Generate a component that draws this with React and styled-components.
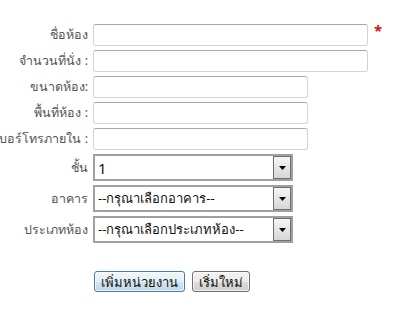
import styled, { createGlobalStyle } from "styled-components";

const GlobalStyle = createGlobalStyle`
  html, body {
    margin: 0;
    padding: 0;
    background: #ffffff;
  }
  body {
    font-family: Tahoma, "Noto Sans", "DejaVu Sans", sans-serif;
  }
`;

const Form = styled.form`
  display: flex;
  flex-direction: column;
  gap: 4px;
  padding-top: 24px;
  width: 393px;
  overflow: hidden;
`;

const Row = styled.div`
  display: grid;
  grid-template-columns: 88px auto;
  column-gap: 5px;
  align-items: center;
`;

const Label = styled.label`
  display: flex;
  justify-content: flex-end;
  white-space: nowrap;
  font-size: 12.5px;
  color: #555555;
`;

const Field = styled.div`
  display: flex;
  align-items: flex-start;
  gap: 6px;
`;

const TextInput = styled.input`
  box-sizing: border-box;
  width: ${(p) => p.$width}px;
  height: 22px;
  margin: 0;
  padding: 2px 4px;
  border: 1px solid #d4d4d4;
  border-top-color: #a9a9a9;
  border-radius: 3px;
  font-size: 13px;
  background: #ffffff;
  outline: none;
`;

const Required = styled.span`
  color: #e01010;
  font-size: 15px;
  font-weight: bold;
  line-height: 1;
  margin-top: -1px;
`;

const SelectBox = styled.div`
  box-sizing: border-box;
  display: flex;
  align-items: stretch;
  width: 200px;
  height: 27px;
  border: 2px solid #a0a0a0;
  background: #ffffff;
`;

const SelectValue = styled.span`
  flex: 1;
  display: flex;
  align-items: center;
  padding-left: 3px;
  font-size: ${(p) => (p.$big ? 15 : 13)}px;
  color: #111111;
  white-space: nowrap;
  overflow: hidden;
`;

const ArrowButton = styled.span`
  box-sizing: border-box;
  width: 18px;
  display: flex;
  align-items: center;
  justify-content: center;
  border: 1px solid #6f6f6f;
  background: linear-gradient(#f6f6f6, #d6d6d6);
`;

const Actions = styled.div`
  display: flex;
  gap: 7px;
  margin-top: 24px;
  padding-left: 94px;
`;

const Button = styled.button`
  box-sizing: border-box;
  height: 21px;
  padding: 0 6px;
  font-family: Tahoma, "Noto Sans", "DejaVu Sans", sans-serif;
  font-size: 13px;
  color: #111111;
  border: 1px solid ${(p) => (p.$focused ? "#3c7fb1" : "#707070")};
  border-radius: 3px;
  background: ${(p) =>
    p.$focused
      ? "linear-gradient(#f0f7fb 0%, #e3eef5 50%, #d4e4ee 51%, #c4d8e5 100%)"
      : "linear-gradient(#f2f2f2 0%, #ebebeb 50%, #dddddd 51%, #cfcfcf 100%)"};
  box-shadow: inset 0 0 0 1px rgba(255, 255, 255, 0.7);
  cursor: pointer;
`;

function Arrow() {
  return (
    <svg width="7" height="4" viewBox="0 0 7 4">
      <path d="M0 0 H7 L3.5 4 Z" fill="#000" />
    </svg>
  );
}

function Select({ value, big }) {
  return (
    <SelectBox>
      <SelectValue $big={big}>{value}</SelectValue>
      <ArrowButton>
        <Arrow />
      </ArrowButton>
    </SelectBox>
  );
}

export default function App() {
  return (
    <>
      <GlobalStyle />
      <Form onSubmit={(e) => e.preventDefault()}>
        <Row>
          <Label>ชื่อห้อง</Label>
          <Field>
            <TextInput $width={275} />
            <Required>*</Required>
          </Field>
        </Row>
        <Row>
          <Label>จำนวนที่นั่ง :</Label>
          <Field>
            <TextInput $width={275} />
          </Field>
        </Row>
        <Row>
          <Label>ขนาดห้อง:</Label>
          <Field>
            <TextInput $width={215} />
          </Field>
        </Row>
        <Row>
          <Label>พื้นที่ห้อง :</Label>
          <Field>
            <TextInput $width={215} />
          </Field>
        </Row>
        <Row>
          <Label>เบอร์โทรภายใน :</Label>
          <Field>
            <TextInput $width={215} />
          </Field>
        </Row>
        <Row>
          <Label>ชั้น</Label>
          <Select value="1" big />
        </Row>
        <Row>
          <Label>อาคาร</Label>
          <Select value="--กรุณาเลือกอาคาร--" />
        </Row>
        <Row>
          <Label>ประเภทห้อง</Label>
          <Select value="--กรุณาเลือกประเภทห้อง--" />
        </Row>
        <Actions>
          <Button type="submit" $focused>
            เพิ่มหน่วยงาน
          </Button>
          <Button type="reset">เริ่มใหม่</Button>
        </Actions>
      </Form>
    </>
  );
}
